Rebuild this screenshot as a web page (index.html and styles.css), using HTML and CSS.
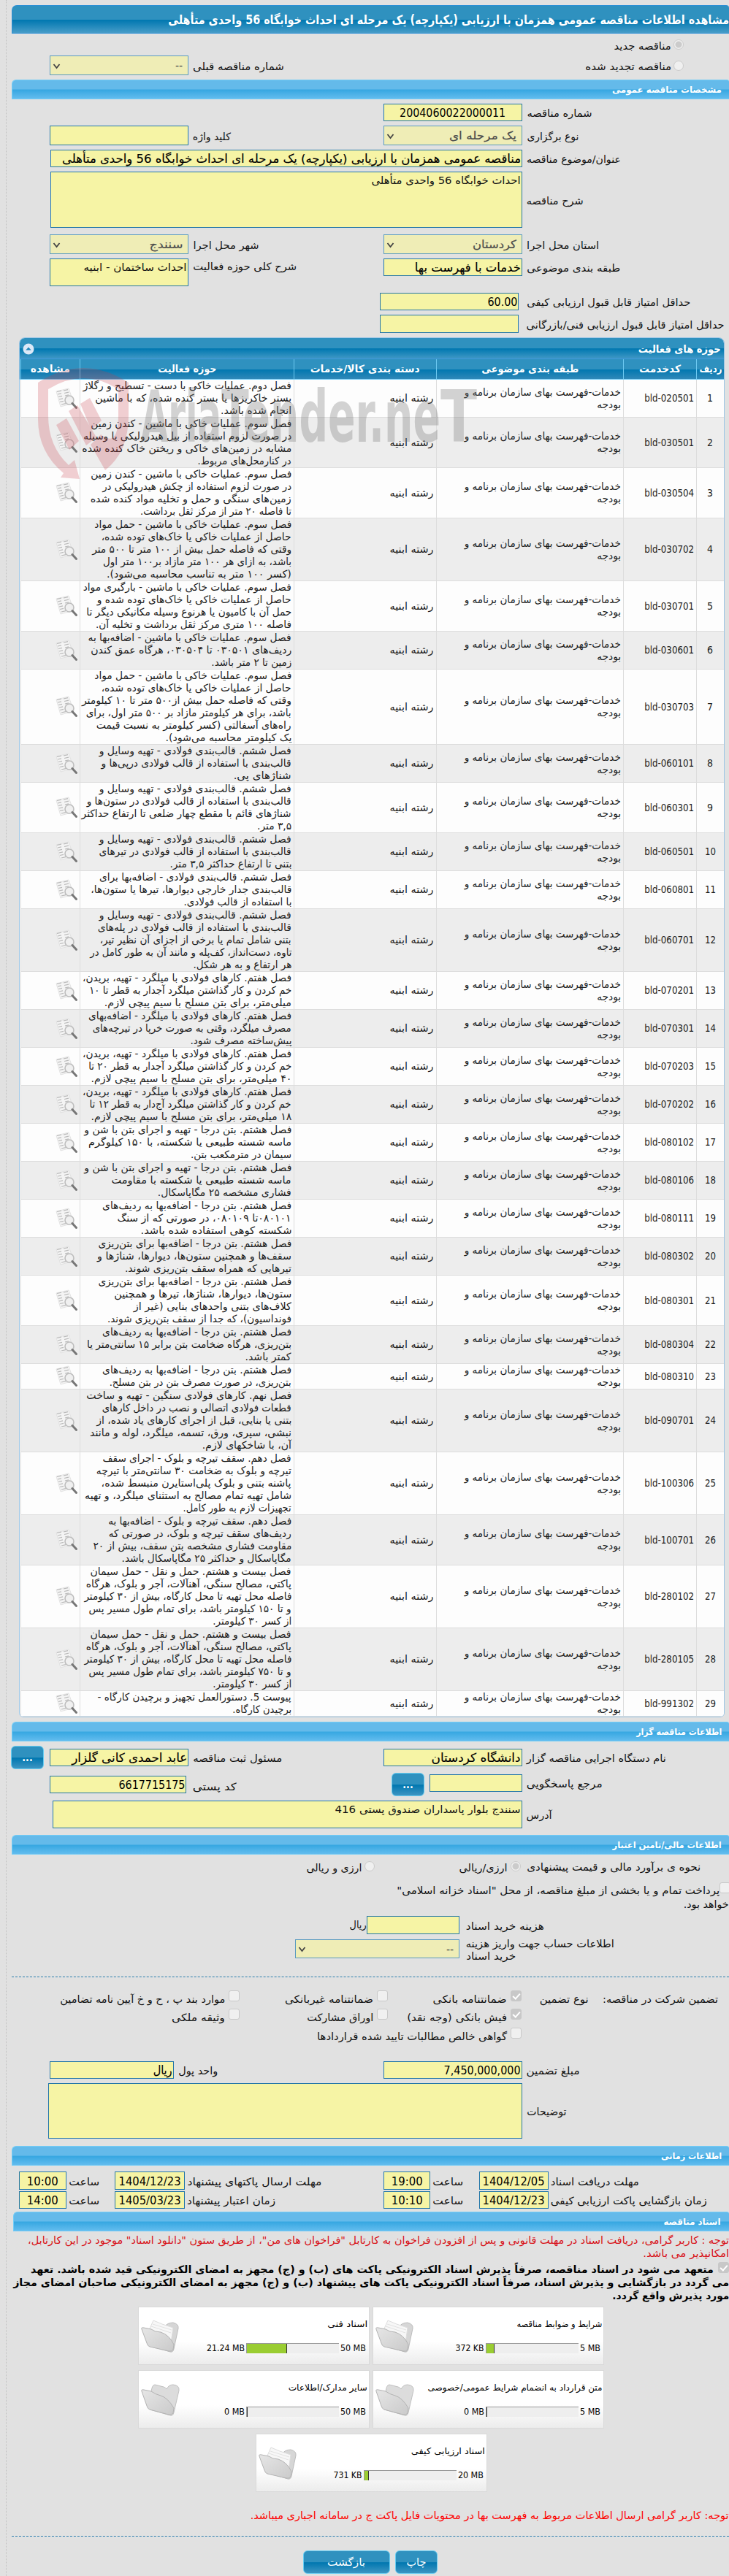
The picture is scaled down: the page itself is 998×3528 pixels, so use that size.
FILE: index.html
```html
<!DOCTYPE html>
<html lang="fa" dir="rtl">
<head>
<meta charset="utf-8">
<title>مشاهده اطلاعات مناقصه</title>
<link rel="stylesheet" href="styles.css">
</head>
<body>
<svg class="defs" width="0" height="0">
  <defs>
    <linearGradient id="fg" x1="0" y1="0" x2="1" y2="1"><stop offset="0" stop-color="#e6e6e6"/><stop offset="1" stop-color="#cacaca"/></linearGradient>
    <symbol id="doc" viewBox="0 0 30 30">
      <path d="M1 5l17-4 7 20-18 5z" fill="#f4f4f4" stroke="#ddd" stroke-width=".8"/>
      <path d="M2 5.500l6-1.400M3 9l5-1.200M4 12.500l5-1.200M5 16l5-1.200M6 19.500l5-1.200M11 4l6-1.400M12 7.500l6-1.400M13 11l5-1.200M8 23l6-1.400" stroke="#b9b9b9" stroke-width="1.200"/>
      <circle cx="19" cy="17" r="6" fill="#eee" fill-opacity=".85" stroke="#bdbdbd" stroke-width="1.600"/>
      <path d="M23 21.500l5.500 6" stroke="#777" stroke-width="3" stroke-linecap="round"/>
    </symbol>
    <symbol id="folder-empty" viewBox="0 0 54 46">
      <path d="M14 12q1-10 5-10l12 3q3 1 4 3 3-6 9-6 9 1 8 8L45 40q-1 5-5 4L12 36z" fill="#dcdcdc" stroke="#c0c0c0"/>
      <path d="M1 11q-1-3 3-2l10 2q5 4 13 6 10 3 18 17l-1 7q-2 3-6 2L12 36q-3-1-4-5z" fill="url(#fg)" stroke="#b3b3b3"/>
    </symbol>
    <symbol id="folder-full" viewBox="0 0 54 46">
      <path d="M32 10q4-6 12-6 8 2 7 8L45 40q-1 5-5 4L20 38z" fill="#d6d6d6" stroke="#bcbcbc"/>
      <path d="M12 12L17 1l12 5 15 5-4 28-27-8z" fill="#f7f7f7" stroke="#ddd"/>
      <path d="M16 6l26 8M14 9l27 9" stroke="#e2e2e2"/>
      <path d="M1 13q-1-3 3-2l10 2q5 4 13 4 12 4 18 17l-1 7q-2 3-6 2L12 37q-3-1-4-5z" fill="url(#fg)" stroke="#b3b3b3"/>
    </symbol>
  </defs>
</svg>
<div class="page">
  <h1 class="title"><span class="fit" data-w="768">مشاهده اطلاعات مناقصه عمومی همزمان با ارزیابی (یکپارچه) یک مرحله ای احداث خوابگاه 56 واحدی متأهلی</span></h1>

  <div class="opt first"><i class="radio on"></i><span class="fit low" data-w="78">مناقصه جدید</span></div>
  <div class="row h27">
    <div class="opt"><i class="radio"></i><span class="fit low" data-w="118">مناقصه تجدید شده</span></div><div></div>
    <div class="lab"><span class="fit" data-w="125">شماره مناقصه قبلی</span></div>
    <div class="sel"><span>--</span><svg width="12" height="9"><path d="M1.500 2l4 5 4-5"/></svg></div>
  </div>

  <h2 class="bar mt6"><span class="fit" data-w="150">مشخصات مناقصه عمومی</span></h2>

  <div class="row mt6 h24">
    <div class="lab"><span class="fit" data-w="89">شماره مناقصه</span></div>
    <div class="inp mid"><span class="fit" data-w="145">2004060022000011</span></div>
  </div>
  <div class="row mt6 h27">
    <div class="lab"><span class="fit" data-w="71">نوع برگزاری</span></div>
    <div class="sel"><span class="fit" data-w="92">یک مرحله ای</span><svg width="12" height="9"><path d="M1.500 2l4 5 4-5"/></svg></div>
    <div class="lab"><span class="fit" data-w="52">کلید واژه</span></div>
    <div class="inp"></div>
  </div>
  <div class="row mt6 h24">
    <div class="lab"><span class="fit" data-w="129">عنوان/موضوع مناقصه</span></div>
    <div class="inp wide"><span class="fit heavy" data-w="628">مناقصه عمومی همزمان با ارزیابی (یکپارچه) یک مرحله ای احداث خوابگاه 56 واحدی متأهلی</span></div>
  </div>
  <div class="row mt6 h77">
    <div class="lab"><span class="fit" data-w="78">شرح مناقصه</span></div>
    <div class="area wide"><span class="fit" data-w="204">احداث خوابگاه 56 واحدی متأهلی</span></div>
  </div>
  <div class="row mt9 h27">
    <div class="lab"><span class="fit" data-w="99">استان محل اجرا</span></div>
    <div class="sel"><span class="fit" data-w="60">کردستان</span><svg width="12" height="9"><path d="M1.500 2l4 5 4-5"/></svg></div>
    <div class="lab"><span class="fit" data-w="90">شهر محل اجرا</span></div>
    <div class="sel"><span class="fit" data-w="46">سنندج</span><svg width="12" height="9"><path d="M1.500 2l4 5 4-5"/></svg></div>
  </div>
  <div class="row top mt6 h38">
    <div class="lab h24"><span class="fit" data-w="128">طبقه بندی موضوعی</span></div>
    <div class="inp h24"><span class="fit heavy" data-w="145">خدمات با فهرست بها</span></div>
    <div class="lab h20"><span class="fit" data-w="142">شرح کلی حوزه فعالیت</span></div>
    <div class="area"><span class="fit" data-w="141">احداث ساختمان - ابنیه</span></div>
  </div>
  <div class="row mt9 h24">
    <div class="lab"><span class="fit" data-w="224">حداقل امتیاز قابل قبول ارزیابی کیفی</span></div>
    <div class="inp shifted"><span class="fit" data-w="41">60.00</span></div>
  </div>
  <div class="row mt6 h25">
    <div class="lab"><span class="fit" data-w="271">حداقل امتیاز قابل قبول ارزیابی فنی/بازرگانی</span></div>
    <div class="inp shifted"></div>
  </div>

  <section class="panel">
    <header class="phead"><span class="fit" data-w="113">حوزه های فعالیت</span>
      <svg width="16" height="16"><circle cx="8" cy="8" r="7.500" fill="#dbe8f7"/><path d="M4.300 9.500L8 5.500l3.700 4z" fill="#1f86ba"/></svg>
    </header>
    <div class="trow thead">
      <div><span class="fit" data-w="31">ردیف</span></div><div><span class="fit" data-w="57">کدخدمت</span></div>
      <div><span class="fit" data-w="133">طبقه بندی موضوعی</span></div><div><span class="fit" data-w="150">دسته بندی کالا/خدمات</span></div>
      <div><span class="fit" data-w="80">حوزه فعالیت</span></div><div><span class="fit" data-w="54">مشاهده</span></div>
    </div>
    <div id="rows"></div>
    <svg class="mark" width="620" height="160" viewBox="0 0 620 160">
      <g fill="#c83a48" fill-opacity=".24">
        <path d="M5 25Q67-15 129 25V70Q129 120 97 145L77 110 91 96Q115 115 115 70V34Q67 4 19 34V70Q19 112 47 138L55 131 62 157 36 155 40 149Q5 120 5 75Z"/>
        <path d="M63 54l13-8 16 31-14 13zM30 83l14-9 17 31-13 12zM47 64l12-8 26 44-14 11z"/>
      </g>
      <g class="marktext"><text x="146" y="106" textLength="110" lengthAdjust="spacingAndGlyphs">Aria</text><text x="256" y="106" textLength="300" lengthAdjust="spacingAndGlyphs">Tender.ne</text><text x="556" y="106" textLength="50" lengthAdjust="spacingAndGlyphs">T</text></g>
    </svg>
  </section>

  <h2 class="bar mt6"><span class="fit" data-w="117">اطلاعات مناقصه گزار</span></h2>
  <div class="row top agency">
    <div class="lab h24"><span class="fit" data-w="191">نام دستگاه اجرایی مناقصه گزار</span></div>
    <div class="inp h24"><span class="fit heavy" data-w="122">دانشگاه کردستان</span></div>
    <div class="lab h24"><span class="fit" data-w="122">مسئول ثبت مناقصه</span></div>
    <div class="inp h24"><span class="fit heavy" data-w="158">عابد احمدی کانی گلزار</span></div>
    <button class="dots">...</button>
  </div>
  <div class="row top contact">
    <div class="lab h24"><span class="fit" data-w="104">مرجع پاسخگویی</span></div>
    <div class="pick"><div class="inp h24"></div><button class="dots">...</button></div>
    <div class="lab h27"><span class="fit" data-w="60">کد پستی</span></div>
    <div class="inp h24 postal"><span class="fit" data-w="91">6617715175</span></div>
  </div>
  <div class="row address h38">
    <div class="lab"><span class="fit" data-w="35">آدرس</span></div>
    <div class="area wide"><span class="fit" data-w="254">سنندج بلوار پاسداران صندوق پستی 416</span></div>
  </div>

  <h2 class="bar mt9"><span class="fit" data-w="149">اطلاعات مالی/تامین اعتبار</span></h2>
  <div class="row currency">
    <div class="lab"><span class="fit" data-w="238">نحوه ی برآورد مالی و قیمت پیشنهادی</span></div>
    <div class="choice"><i class="radio on"></i><span class="fit" data-w="66">ارزی/ریالی</span></div>
    <div class="choice second"><i class="radio"></i><span class="fit" data-w="76">ارزی و ریالی</span></div>
  </div>
  <p class="treasury"><i class="check"></i><span class="fit" data-w="442">پرداخت تمام و یا بخشی از مبلغ مناقصه، از محل "اسناد خزانه اسلامی"</span><br><span class="fit" data-w="62">خواهد بود.</span></p>
  <div class="fee h25">
    <div class="lab"><span class="fit" data-w="107">هزینه خرید اسناد</span></div>
    <div class="inp"></div><div class="low"><span class="fit" data-w="23">ریال</span></div>
  </div>
  <div class="fee account">
    <div class="lab two"><div><span class="fit" data-w="203">اطلاعات حساب جهت واریز هزینه</span></div><div><span class="fit" data-w="68">خرید اسناد</span></div></div>
    <div class="sel"><span>--</span><svg width="12" height="9"><path d="M1.500 2l4 5 4-5"/></svg></div>
  </div>
  <hr class="rule">
  <div class="guarantee">
    <div class="low"><span class="fit" data-w="158">تضمین شرکت در مناقصه:</span></div>
    <div class="low"><span class="fit" data-w="67">نوع تضمین</span></div>
    <div class="tick"><i class="check on"></i><span class="fit" data-w="101">ضمانتنامه بانکی</span></div>
    <div class="tick"><i class="check"></i><span class="fit" data-w="121">ضمانتنامه غیربانکی</span></div>
    <div class="tick"><i class="check"></i><span class="fit" data-w="226">موارد بند پ ، ح و خ آیین نامه تضامین</span></div>
    <div></div><div></div>
    <div class="tick"><i class="check on"></i><span class="fit" data-w="137">فیش بانکی (وجه نقد)</span></div>
    <div class="tick"><i class="check"></i><span class="fit" data-w="91">اوراق مشارکت</span></div>
    <div class="tick"><i class="check"></i><span class="fit" data-w="73">وثیقه ملکی</span></div>
    <div></div><div></div>
    <div class="tick"><i class="check"></i><span class="fit" data-w="260">گواهی خالص مطالبات تایید شده قراردادها</span></div>
  </div>
  <div class="row amount h24">
    <div class="lab"><span class="fit" data-w="73">مبلغ تضمین</span></div>
    <div class="inp"><span class="fit" data-w="105">7,450,000,000</span></div>
    <div class="lab"><span class="fit" data-w="54">واحد پول</span></div>
    <div class="inp"><span class="fit heavy" data-w="26">ریال</span></div>
  </div>
  <div class="row mt6 notes">
    <div class="lab"><span class="fit" data-w="54">توضیحات</span></div>
    <div class="area wide"></div>
  </div>

  <h2 class="bar mt10"><span class="fit" data-w="83">اطلاعات زمانی</span></h2>
  <div class="times">
    <div class="lab"><span class="fit" data-w="121">مهلت دریافت اسناد</span></div><div class="inp mid"><span class="fit" data-w="85">1404/12/05</span></div>
    <div class="lab"><span class="fit" data-w="42">ساعت</span></div><div class="inp mid"><span class="fit" data-w="43">19:00</span></div>
    <div class="lab"><span class="fit" data-w="184">مهلت ارسال پاکتهای پیشنهاد</span></div><div class="inp mid"><span class="fit" data-w="85">1404/12/23</span></div>
    <div class="lab"><span class="fit" data-w="42">ساعت</span></div><div class="inp mid"><span class="fit" data-w="43">10:00</span></div>
    <div class="lab"><span class="fit" data-w="214">زمان بازگشایی پاکت ارزیابی کیفی</span></div><div class="inp mid"><span class="fit" data-w="85">1404/12/23</span></div>
    <div class="lab"><span class="fit" data-w="42">ساعت</span></div><div class="inp mid"><span class="fit" data-w="43">10:10</span></div>
    <div class="lab"><span class="fit" data-w="121">زمان اعتبار پیشنهاد</span></div><div class="inp mid"><span class="fit" data-w="85">1405/03/23</span></div>
    <div class="lab"><span class="fit" data-w="42">ساعت</span></div><div class="inp mid"><span class="fit" data-w="43">14:00</span></div>
  </div>

  <h2 class="bar docs"><span class="fit" data-w="78">اسناد مناقصه</span></h2>
  <p class="warn"><span class="fit" data-w="960">توجه : کاربر گرامی، دریافت اسناد در مهلت قانونی و پس از افزودن فراخوان به کارتابل "فراخوان های من"، از طریق ستون "دانلود اسناد" موجود در این کارتابل،</span><br><span class="fit" data-w="118">امکانپذیر می باشد.</span></p>
  <p class="pledge"><i class="check on"></i><span class="fit" data-w="935">متعهد می شود در اسناد مناقصه، صرفاً پذیرش اسناد الکترونیکی پاکت های (ب) و (ج) مجهز به امضای الکترونیکی قید شده باشد. تعهد</span><br><span class="fit" data-w="980">می گردد در بازگشایی و پذیرش اسناد، صرفاً اسناد الکترونیکی پاکت های پیشنهاد (ب) و (ج) مجهز به امضای الکترونیکی صاحبان امضای مجاز</span><br><span class="fit" data-w="160">مورد پذیرش واقع گردد.</span></p>

  <div class="cards">
    <article class="card"><div class="ct"><span class="fit" data-w="117">شرایط و ضوابط مناقصه</span></div><div class="meter"><span class="fit" data-w="28">5 MB</span><div class="track"><i class="p9"></i></div><span class="fit" data-w="39">372 KB</span></div><svg><use href="#folder-full"/></svg></article>
    <article class="card"><div class="ct"><span class="fit" data-w="55">اسناد فنی</span></div><div class="meter"><span class="fit" data-w="35">50 MB</span><div class="track"><i class="p43"></i></div><span class="fit" data-w="52">21.24 MB</span></div><svg><use href="#folder-full"/></svg></article>
    <article class="card"><div class="ct"><span class="fit" data-w="239">متن قرارداد به انضمام شرایط عمومی/خصوصی</span></div><div class="meter"><span class="fit" data-w="28">5 MB</span><div class="track"><i></i></div><span class="fit" data-w="28">0 MB</span></div><svg><use href="#folder-empty"/></svg></article>
    <article class="card"><div class="ct"><span class="fit" data-w="108">سایر مدارک/اطلاعات</span></div><div class="meter"><span class="fit" data-w="35">50 MB</span><div class="track"><i></i></div><span class="fit" data-w="28">0 MB</span></div><svg><use href="#folder-empty"/></svg></article>
    <article class="card"><div class="ct"><span class="fit" data-w="101">اسناد ارزیابی کیفی</span></div><div class="meter"><span class="fit" data-w="35">20 MB</span><div class="track"><i class="p5"></i></div><span class="fit" data-w="39">731 KB</span></div><svg><use href="#folder-full"/></svg></article>
  </div>

  <p class="note"><span class="fit" data-w="655">توجه: کاربر گرامی ارسال اطلاعات مربوط به فهرست بها در محتویات فایل پاکت ج در سامانه اجباری میباشد.</span></p>
  <hr class="rule last">
  <div class="actions"><button class="print"><span class="fit" data-w="27">چاپ</span></button><button class="back"><span class="fit" data-w="52">بازگشت</span></button></div>
</div>
<script src="app.js"></script>
</body>
</html>
```

FILE: styles.css
```css
* { box-sizing: border-box; }
html { overflow: hidden; background: #e1e1e1; }
body { margin: 0; width: 998px; height: 3528px; overflow: hidden; background: #e1e1e1; color: #111; font: 14px/17px "DejaVu Sans Condensed", "DejaVu Sans", sans-serif; font-stretch: condensed; }
.defs { position: absolute; }
.page { width: 990px; height: 3528px; padding-top: 7px; border-left: 1px dotted #c0c0c0; overflow: hidden; }
.fit { display: inline-block; white-space: nowrap; transform-origin: right center; flex: none; }
.low { padding-top: 4px; }
.mt6 { margin-top: 6px; }
.mt9 { margin-top: 9px; }
.mt10 { margin-top: 10px; }
.h20 { height: 20px; }
.h24 { height: 24px; }
.h25 { height: 25px; }
.h27 { height: 27px; }
.h38 { height: 38px; }
.h77 { height: 77px; }

/* Headings */
.title { margin: 0 0 0 7px; height: 39px; display: flex; align-items: center; color: #fff; font-size: 17px; line-height: 22px; font-weight: bold; border: 1px solid #2b8fd6; border-right: 0; border-radius: 7px 4px 0 0; background: linear-gradient(#2f91bf 0 50%, #0077b0 52%, #469cc8); }
.bar { margin-bottom: 0; margin-left: 7px; margin-right: 0; height: 27px; padding: 1px 10px 0 0; display: flex; align-items: center; color: #fff; font-size: 12px; font-weight: bold; border: solid #72ccf6; border-width: 1px 0 1px 1px; border-radius: 6px 3px 0 0; background: linear-gradient(#64baea 0 46%, #38a8e2 54%, #62bcee); }

/* Form grid */
.row { display: grid; grid-template-columns: 283px 190px 267px 190px 53px; align-items: stretch; }
.row.top { align-items: start; }
.lab { padding: 3px 0 0 6px; display: flex; align-items: center; justify-content: flex-end; }
.inp, .area { border: 1px solid #2477a8; background: #f6f4a5; padding: 0 1px; }
.inp { display: flex; align-items: center; font-size: 16.5px; line-height: 20px; padding-top: 2px; color: #000; }
.inp.mid { justify-content: center; }
.area { padding-top: 2px; align-self: stretch; line-height: 18px; }
.wide { grid-column: 2 / 5; margin-left: 1px; }
.heavy { -webkit-text-stroke: .15px #000; }
.shifted { transform: translateX(-5px); }
.sel { border: 1px solid #5a9bc0; background: #efedb6; color: #4c4c4c; display: flex; align-items: center; justify-content: space-between; padding: 1px 7px 0 3px; font-size: 15.5px; line-height: 20px; }
.sel .fit { -webkit-text-stroke: .2px #4c4c4c; }
.sel svg { fill: none; stroke: #444; stroke-width: 1.8; }
.opt { display: flex; align-items: center; gap: 3px; padding-right: 62px; }
.opt.first { height: 30px; }
.radio { flex: none; width: 14px; height: 14px; border: 1px solid #cbcbcb; border-radius: 50%; background: #f0f0f0; }
.radio.on { background: radial-gradient(circle, #cbcbcb 0 4px, #f0f0f0 5px); }
.check { flex: none; display: inline-block; width: 15px; height: 15px; border: 1px solid #c8c8c8; border-radius: 3px; background: #f0f0f0; }
.check.on { background: #c8c8c8; }
.check.on::after { content: ""; display: block; width: 4px; height: 8px; margin: 1px auto 0; border: solid #fff; border-width: 0 2px 2px 0; transform: rotate(42deg); }

/* Activity table */
.panel { position: relative; margin: 6px 6px 0 17px; height: 1890px; border: 1px solid #9cc6e6; border-radius: 8px 8px 6px 6px; background: #fff; overflow: hidden; }
.phead { height: 28px; padding: 2px 4px 0 4px; display: flex; justify-content: space-between; align-items: center; color: #fff; font-weight: bold; background: linear-gradient(#2f91bf 0 50%, #0077b0 52%, #3f98c5); }
.trow { display: grid; grid-template-columns: 38px 100px 256px 195px 293px 81px; border-bottom: 1px solid #ddd; color: #1c1c1c; width: 963px; }
.trow > div { border-left: 1px solid #ddd; padding-right: 3px; display: flex; flex-direction: column; justify-content: center; align-items: flex-start; background: #fdfdfd; }
.trow.even > div { background: #ededed; }
.trow > .num { align-items: center; padding: 0; }
.trow .line { height: 17px; white-space: nowrap; }
.thead { width: auto; height: 29px; border-top: 1px solid #3c98dc; border-bottom: 1px solid #72ccf6; background: linear-gradient(#2f91bf 0 50%, #0077b0 52%, #2f88b8); color: #fff; font-weight: bold; }
.trow.thead > div { background: none; border-color: #6cc8f0; align-items: center; padding: 0; }
.n2 { height: 35px; }
.n3 { height: 52px; }
.n4 { height: 69px; }
.n5 { height: 86px; }
.n6 { height: 103px; }
.mark { position: absolute; left: 20px; top: 36px; direction: ltr; }
.marktext { fill: #707070; fill-opacity: .3; font: bold 98px "DejaVu Sans Condensed", sans-serif; text-anchor: start; }

/* Agency */
.agency { margin-top: 10px; height: 35px; }
.agency .dots { margin: -4px 8px 0 0; }
.contact { margin-top: 0; height: 35px; }
.contact .dots { margin-top: -2px; }
.contact .lab.h27, .contact .postal { margin-top: 2px; }
.postal { margin-right: 3px; }
.pick { display: flex; gap: 7px; }
.pick .inp { width: 127px; }
button { font: inherit; border: 1px solid #66cdf2; border-radius: 6px; color: #fff; background: linear-gradient(#2f91bf 0 50%, #0077b0 52%, #3d95c2); padding: 0; }
.dots { width: 45px; height: 32px; font-weight: bold; }
.address { margin-top: 1px; }
.address .area { margin-left: 4px; }

/* Finance */
.currency { margin-top: 3px; height: 26px; }
.choice { display: flex; align-items: center; gap: 4px; padding-right: 2px; }
.choice .fit { padding-top: 5px; }
.choice.second { padding-right: 12px; }
.treasury { margin: 9px -2px 0 0; height: 44px; line-height: 19px; }
.treasury .check { vertical-align: top; margin-left: 0; }
.treasury .fit { position: relative; top: 2px; right: 2px; }
.treasury .check + .fit { right: 0; }
.fee { display: grid; grid-template-columns: 369px 127px 40px; margin-top: 2px; }
.fee .lab { padding-left: 9px; }
.account { grid-template-columns: 369px 225px; margin-top: 5px; height: 33px; }
.account .sel { height: 26px; margin-top: 2px; }
.lab.two { display: block; text-align: left; line-height: 17px; padding-top: 0; }
.rule { border: 0; border-top: 1px dashed #2c7fae; margin: 20px 0 0 7px; }
.guarantee { display: grid; grid-template-columns: 177px 92px 183px 203px 300px; grid-template-rows: 25px 26px 20px; padding-right: 15px; margin-top: 18px; height: 71px; }
.tick { display: flex; align-items: flex-start; gap: 5px; }
.tick .fit { padding-top: 4px; }
.amount { margin-top: 26px; grid-template-columns: 283px 190px 287px 170px 53px; }
.notes { height: 76px; }
.notes .area { margin-left: -2px; }

/* Dates */
.times { display: grid; grid-template-columns: 247px 95px 67px 64px 272px 96px 66px 65px; grid-template-rows: 25px 24px; row-gap: 2px; margin-top: 8px; }
.times .lab { padding-left: 3px; }
.docs { margin-left: 9px; margin-top: 4px; padding-right: 12px; }

/* Notices */
.warn { margin: 3px 0 0; color: #d80f16; line-height: 18px; height: 36px; }
.pledge { margin: 3px 0 0; color: #000; font-weight: bold; line-height: 18px; height: 61px; }
.pledge .check { vertical-align: top; margin-left: 6px; }
.pledge .fit { position: relative; top: 1px; }

/* Document cards */
.cards { width: 638px; margin: 0 171px 0 0; display: flex; flex-wrap: wrap; justify-content: center; gap: 7px 4px; }
.card { width: 317px; height: 80px; display: grid; direction: rtl; grid-template-columns: 252px 54px; grid-template-rows: 46px 20px; border: 1px solid #d9d9d9; background: linear-gradient(#fff 0 60%, #ececec); padding-right: 2px; gap: 0 4px; font-size: 12px; color: #000; }
.card svg { grid-column: 2; grid-row: 1 / 3; width: 54px; height: 46px; align-self: end; margin-bottom: 3px; }
.ct { padding-top: 15px; }
.meter { display: flex; align-items: center; gap: 2px; padding-right: 2px; direction: rtl; }
.meter .fit { direction: ltr; }
.track { width: 127px; height: 14px; background: #eee; border-top: 1px solid #999; border-left: 1px solid #999; display: flex; justify-content: flex-end; }
.track i { width: 1px; background: #9acd32; border-right: 1px solid #333; }
.track .p9 { width: 11px; }
.track .p43 { width: 55px; }
.track .p5 { width: 6px; }
.note { margin: 24px 0 0; color: #fe0000; height: 17px; }
.rule.last { margin-top: 19px; }
.actions { display: flex; gap: 7px; margin-top: 19px; padding-right: 399px; }
.actions button { height: 32px; }
.print { width: 58px; }
.back { width: 119px; }
```

FILE: app.js
```js
// Activity rows: code, then each line of the description with its width in px.
const rows = [
  ["bld-020501", ["فصل دوم. عملیات خاکی با دست - تسطیح و رگلاژ", 285], ["بستر خاکریزها یا بستر کنده شده، که با ماشین", 269], ["انجام شده باشد.", 97]],
  ["bld-030501", ["فصل سوم. عملیات خاکی با ماشین - کندن زمین", 275], ["در صورت لزوم استفاده از بیل هیدرولیکی یا  وسیله", 285], ["مشابه در زمین‌های خاکی و ریختن خاک کنده شده", 287], ["در کنارمحل‌های مربوط.", 128]],
  ["bld-030504", ["فصل سوم. عملیات خاکی با ماشین - کندن زمین", 275], ["در صورت لزوم استفاده از چکش هیدرولیکی در", 259], ["زمین‌های  سنگی و حمل و تخلیه مواد کنده شده", 275], ["تا فاصله ۲۰ متر از مرکز ثقل برداشت.", 207]],
  ["bld-030702", ["فصل سوم. عملیات خاکی با ماشین - حمل مواد", 270], ["حاصل از عملیات خاکی یا خاک‌های توده شده،", 260], ["وقتی که فاصله حمل بیش از ۱۰۰ متر تا ۵۰۰ متر", 273], ["باشد، به ازای هر ۱۰۰ متر مازاد بر۱۰۰ متر اول", 258], ["(کسر ۱۰۰ متر به تناسب محاسبه می‌شود).", 253]],
  ["bld-030701", ["فصل سوم. عملیات خاکی با ماشین - بارگیری مواد", 285], ["حاصل از عملیات خاکی یا خاک‌های توده شده و", 266], ["حمل آن با کامیون یا هرنوع وسیله مکانیکی دیگر تا", 281], ["فاصله ۱۰۰ متری مرکز ثقل  برداشت و تخلیه آن.", 268]],
  ["bld-030601", ["فصل سوم. عملیات خاکی با ماشین - اضافه‌بها به", 278], ["ردیف‌های ۰۳۰۵۰۱ تا ۰۳۰۵۰۴، هرگاه عمق کندن", 275], ["زمین تا ۲ متر باشد.", 110]],
  ["bld-030703", ["فصل سوم. عملیات خاکی با ماشین - حمل مواد", 270], ["حاصل از عملیات خاکی یا خاک‌های توده شده،", 260], ["وقتی  که فاصله حمل بیش از۵۰۰ متر تا ۱۰ کیلومتر", 287], ["باشد، برای هر کیلومتر مازاد بر ۵۰۰  متر اول، برای", 281], ["راه‌های آسفالتی (کسر کیلومتر به نسبت قیمت", 267], ["یک کیلومتر محاسبه می‌شود).", 173]],
  ["bld-060101", ["فصل ششم. قالب‌بندی فولادی - تهیه وسایل و", 263], ["قالب‌بندی با استفاده از قالب فولادی درپی‌ها و", 260], ["شناژهای پی.", 79]],
  ["bld-060301", ["فصل ششم. قالب‌بندی فولادی - تهیه وسایل و", 263], ["قالب‌بندی با استفاده از قالب فولادی در ستون‌ها و", 280], ["شناژهای قائم با مقطع چهار ضلعی تا ارتفاع حداکثر", 287], ["۳,۵ متر.", 47]],
  ["bld-060501", ["فصل ششم. قالب‌بندی فولادی - تهیه وسایل و", 263], ["قالب‌بندی با استفاده از قالب فولادی در تیرهای", 263], ["بتنی تا ارتفاع حداکثر ۳,۵ متر.", 167]],
  ["bld-060801", ["فصل ششم. قالب‌بندی فولادی - اضافه‌بها برای", 263], ["قالب‌بندی جدار خارجی دیوارها، تیرها یا ستون‌ها،", 275], ["با استفاده از قالب فولادی.", 148]],
  ["bld-060701", ["فصل ششم. قالب‌بندی فولادی - تهیه وسایل و", 263], ["قالب‌بندی با استفاده از قالب فولادی در پله‌های", 265], ["بتنی شامل تمام یا برخی از اجزای آن نظیر تیر،", 262], ["تاوه، دست‌انداز، کف‌پله و مانند آن به طور کامل در", 276], ["هر ارتفاع و به هر شکل.", 135]],
  ["bld-070201", ["فصل هفتم. کارهای فولادی با میلگرد - تهیه، بریدن،", 286], ["خم کردن و کار گذاشتن میلگرد آجدار به قطر تا ۱۰", 277], ["میلی‌متر، برای بتن مسلح با سیم پیچی لازم.", 256]],
  ["bld-070301", ["فصل هفتم. کارهای فولادی با میلگرد - اضافه‌بهای", 278], ["مصرف میلگرد، وقتی به صورت خرپا در تیرچه‌های", 272], ["پیش‌ساخته مصرف شود.", 139]],
  ["bld-070203", ["فصل هفتم. کارهای فولادی با میلگرد - تهیه، بریدن،", 286], ["خم کردن و کار گذاشتن میلگرد آجدار به قطر ۲۰ تا", 278], ["۴۰ میلی‌متر، برای بتن مسلح با سیم پیچی لازم.", 275]],
  ["bld-070202", ["فصل هفتم. کارهای فولادی با میلگرد - تهیه، بریدن،", 286], ["خم کردن و کار گذاشتن میلگرد آج‌دار به قطر ۱۲ تا", 276], ["۱۸ میلی‌متر، برای بتن مسلح با سیم پیچی لازم.", 275]],
  ["bld-080102", ["فصل هشتم. بتن درجا - تهیه و اجرای بتن با شن و", 284], ["ماسه شسته طبیعی یا شکسته، با ۱۵۰ کیلوگرم", 278], ["سیمان در مترمکعب بتن.", 138]],
  ["bld-080106", ["فصل هشتم. بتن درجا - تهیه و اجرای بتن با شن و", 284], ["ماسه شسته طبیعی یا شکسته با مقاومت", 246], ["فشاری مشخصه ۲۵ مگاپاسکال.", 183]],
  ["bld-080111", ["فصل هشتم. بتن درجا - اضافه‌بها به ردیف‌های", 259], ["۰۸۰۱۰۱تا ۰۸۰۱۰۹، در صورتی که از سنگ", 238], ["شکسته کوهی استفاده شده باشد.", 207]],
  ["bld-080302", ["فصل هشتم. بتن درجا - اضافه‌بها برای بتن‌ریزی", 265], ["سقف‌ها و همچنین ستون‌ها، دیوارها، شناژها و", 266], ["تیرهایی که همراه سقف بتن‌ریزی شوند.", 228]],
  ["bld-080301", ["فصل هشتم. بتن درجا - اضافه‌بها برای بتن‌ریزی", 265], ["ستون‌ها، دیوارها، شناژها، تیرها و همچنین", 243], ["کلاف‌های بتنی واحدهای بنایی (غیر از", 216], ["فونداسیون)، که جدا از سقف بتن‌ریزی شوند.", 252]],
  ["bld-080304", ["فصل هشتم. بتن درجا - اضافه‌بها به ردیف‌های", 259], ["بتن‌ریزی، هرگاه ضخامت بتن برابر ۱۵ سانتی‌متر یا", 280], ["کمتر باشد.", 63]],
  ["bld-080310", ["فصل هشتم. بتن درجا - اضافه‌بها به ردیف‌های", 259], ["بتن‌ریزی، در صورت مصرف بتن در بتن مسلح.", 249]],
  ["bld-090701", ["فصل نهم. کارهای فولادی سنگین - تهیه و ساخت", 281], ["قطعات فولادی اتصالی و نصب در داخل کارهای", 259], ["بتنی یا بنایی، قبل از اجرای کارهای یاد شده، از", 267], ["نبشی، سپری، ورق، تسمه، میلگرد، لوله و مانند", 276], ["آن، با شاخکهای لازم.", 122]],
  ["bld-100306", ["فصل دهم. سقف تیرچه و بلوک - اجرای سقف", 258], ["تیرچه و بلوک به ضخامت ۳۰ سانتی‌متر با تیرچه", 267], ["پاشنه بتنی و بلوک پلی‌استایرن منبسط شده،", 260], ["شامل تهیه تمام مصالح به استثنای میلگرد، و تهیه", 283], ["تجهیزات لازم به طور کامل.", 148]],
  ["bld-100701", ["فصل دهم. سقف تیرچه و بلوک - اضافه‌بها به", 251], ["ردیف‌های سقف تیرچه و بلوک، در صورتی که", 250], ["مقاومت فشاری مشخصه بتن سقف، بیش از ۲۰", 272], ["مگاپاسکال و حداکثر ۲۵ مگاپاسکال باشد.", 232]],
  ["bld-280102", ["فصل بیست و هشتم. حمل و نقل - حمل سیمان", 275], ["پاکتی، مصالح سنگی، آهنآلات، آجر و بلوک، هرگاه", 281], ["فاصله محل تهیه تا محل کارگاه، بیش از ۳۰ کیلومتر", 284], ["و تا ۱۵۰ کیلومتر باشد، برای تمام طول مسیر پس", 277], ["از کسر ۳۰ کیلومتر.", 108]],
  ["bld-280105", ["فصل بیست و هشتم. حمل و نقل - حمل سیمان", 275], ["پاکتی، مصالح سنگی، آهنآلات، آجر و بلوک، هرگاه", 281], ["فاصله محل تهیه تا محل کارگاه، بیش از ۳۰ کیلومتر", 284], ["و تا ۷۵۰ کیلومتر باشد، برای تمام طول مسیر پس", 277], ["از کسر ۳۰ کیلومتر.", 108]],
  ["bld-991302", ["پیوست 5. دستورالعمل تجهیز و برچیدن کارگاه -", 265], ["برچیدن کارگاه.", 81]]
];

const line = (text, w) => `<div class="line"><span class="fit" data-w="${w}">${text}</span></div>`;

document.getElementById("rows").innerHTML = rows.map(([code, ...desc], i) => `
  <div class="trow n${desc.length}${i % 2 ? " even" : ""}">
    <div class="num">${line(i + 1, i < 9 ? 8 : 15)}</div>
    <div>${line(code, 68)}</div>
    <div>${line("خدمات-فهرست بهای سازمان برنامه و", 214)}${line("بودجه", 33)}</div>
    <div>${line("رشته ابنیه", 60)}</div>
    <div>${desc.map(([t, w]) => line(t, w)).join("")}</div>
    <div><svg width="30" height="30"><use href="#doc"/></svg></div>
  </div>`).join("");

document.querySelectorAll(".fit").forEach(el => {
  const natural = el.getBoundingClientRect().width;
  const wanted = Number(el.dataset.w);
  el.style.transform = `scaleX(${wanted / natural})`;
  el.style.marginLeft = `${wanted - natural}px`;
});
```
